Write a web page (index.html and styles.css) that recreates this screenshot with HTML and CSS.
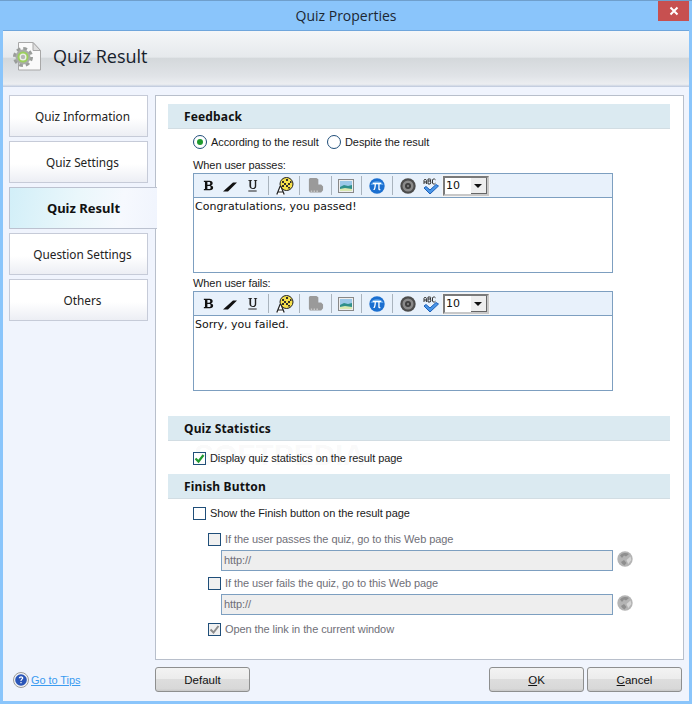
FILE: index.html
```html
<!DOCTYPE html>
<html lang="en">
<head>
    <meta charset="UTF-8">
    <meta name="viewport" content="width=device-width, initial-scale=1.0">
    <title>Quiz Properties</title>
    <link rel="stylesheet" href="styles.css">
</head>
<body>

<svg class="icon-defs" width="0" height="0">
    <defs>
        <symbol id="i-bold" viewBox="0 0 14 14"><path d="M2 2h6c2.500 0 3.500 1 3.500 2.700 0 1.300-.8 2-2 2.200 1.600.2 2.500 1 2.500 2.400C12 11 10.800 12 8.500 12H2v-1.200h1.200V3.200H2zM5.800 3.200v3.100h1.600c1 0 1.500-.5 1.500-1.600s-.5-1.500-1.500-1.500zM5.800 7.500v3.300h1.900c1.100 0 1.600-.6 1.600-1.700S8.800 7.500 7.700 7.500z" fill="#111"/></symbol>
        <symbol id="i-slash" viewBox="0 0 14 14"><path d="M0 12.500 L10 3.500 H14 L5 12.500z" fill="#111"/></symbol>
        <symbol id="i-under" viewBox="0 0 14 14"><path d="M2.500 1h4v1h-1v5.500c0 1.500.6 2.200 1.800 2.200S9.500 9 9.500 7.500V2h-1V1h3.500v1h-1v5.600c0 2.200-1.200 3.200-3.300 3.200S3.700 9.800 3.700 7.600V2h-1.200zM2.500 12.300h9v1.100h-9z" fill="#222"/></symbol>
        <symbol id="i-palette" viewBox="0 0 18 18"><circle cx="10.500" cy="7" r="6.500" fill="#f6e04a" stroke="#222"/><path d="M6 4h2v2H6zM10 2h2v2h-2zM8 6h2v2H8zM12 6h2v2h-2zM10 8h2v2h-2zM6 8h2v2H6zM14 4h1.500v2H14zM12 10h2v1.500h-2z" fill="#33302a"/><path d="M.8 17.500 4 9.500h1l3.200 8M2 15h5" fill="#fff" stroke="#222" stroke-width="1.200"/></symbol>
        <symbol id="i-media" viewBox="0 0 18 18"><path d="M3 1h7l2 1.500v5.500h3l2 2v4l-2 2.500H3l-1-2V2.500z" fill="#9a9a9a"/><path d="M4 15h1.500M7 15h1.500M10 15h1.500" stroke="#e6e6e6"/></symbol>
        <symbol id="i-image" viewBox="0 0 16 14"><rect x=".5" y=".5" width="15" height="13" fill="#eee" stroke="#888"/><rect x="2" y="2" width="12" height="10" fill="#9cc8e8"/><path d="M2 8l4-2 4 1 4-1v6H2z" fill="#2f8f8a"/><path d="M2 10l5-1 7 1v2H2z" fill="#d8e8b0"/></symbol>
        <symbol id="i-pi" viewBox="0 0 16 16"><circle cx="8" cy="8" r="7.700" fill="#1b6fd0"/><path d="M1.500 7a7 6 0 0 1 13 0z" fill="#5ea4ea"/><path d="M3.800 4.800h8.400v1.300h-1.600v4.400c0 .5.2.7.8.6v1.100c-1.300.3-2.100-.2-2.100-1.500V6.100H6.900c0 2.700-.4 4.700-1.300 6H4.200c1-1.500 1.400-3.300 1.400-6H3.800z" fill="#fff"/></symbol>
        <symbol id="i-speaker" viewBox="0 0 16 16"><circle cx="8" cy="8" r="7.700" fill="#4c4c4c"/><circle cx="8" cy="8" r="5.500" fill="#8a8a8a"/><circle cx="8" cy="8" r="3" fill="#3c3c3c"/><circle cx="8" cy="8" r="1.200" fill="#777"/></symbol>
        <symbol id="i-spell" viewBox="0 0 16 16"><path d="M1 6V2.300L2.200 1l1.200 1.300V6M1 4h2.400M5 1h2.200l.8.800-.8 1.200.8 1-.8 2H5zM5 3h2M12.500 1.800 11.500 1h-1.300L9.500 2v3l.7 1h1.300l1-.8" fill="none" stroke="#333"/><path d="M1 10l2-1.500L7 12l6-5.500 2.500 1.500L7 16z" fill="#4a96e8" stroke="#1c5fb8" stroke-width="1"/></symbol>
        <symbol id="i-go" viewBox="0 0 16 16"><circle cx="8" cy="8" r="7.700" fill="#b4b4b4"/><path d="M3 4.500a7 7 0 0 1 9-1.500l-3 2.500-2-1-2 2.500zM4 11l3-2 2.500 3-2 2.500A7 7 0 0 1 4 11z" fill="#8f8f8f"/><path d="M9.500 9l4-3.500.8 3.500-3 4z" fill="#d6d6d6"/></symbol>
    </defs>
</svg>

<div class="window">
    <div class="titlebar">
        <span class="title-text">Quiz Properties</span>
        <div class="close-btn">
            <svg width="10" height="10" viewBox="0 0 10 10"><path d="M1.500 1.500l7 7M8.500 1.500l-7 7" stroke="#fff" stroke-width="2"/></svg>
        </div>
    </div>

    <div class="client">
        <div class="page-header">
            <svg class="header-icon" width="32" height="32" viewBox="0 0 32 32">
                <path d="M6.500 1.500H21l7.500 8v19.500H6.500z" fill="#fafafa" stroke="#a8a8a8"/>
                <path d="M21 1.500v8h7.500z" fill="#dedede" stroke="#a8a8a8"/>
                <circle cx="11" cy="16" r="8" fill="none" stroke="#9a9d9a" stroke-width="4" stroke-dasharray="3.600 2.680"/>
                <circle cx="11" cy="16" r="7.500" fill="#a9aca9"/>
                <circle cx="11" cy="16" r="4.500" fill="#eef2e8" stroke="#9ccf5e" stroke-width="2"/>
                <circle cx="11" cy="16" r="2.200" fill="#b5b8b5"/>
            </svg>
            <h1 class="page-title">Quiz Result</h1>
        </div>

        <div class="main">
            <div class="sidebar">
                <div class="tab">Quiz Information</div>
                <div class="tab">Quiz Settings</div>
                <div class="tab tab-active">Quiz Result</div>
                <div class="tab">Question Settings</div>
                <div class="tab">Others</div>
                <a class="tips-link" href="#">
                    <svg width="16" height="16" viewBox="0 0 16 16"><circle cx="8" cy="8" r="7.500" fill="#f4f4f4" stroke="#9a9a9a"/><circle cx="8" cy="8" r="5.800" fill="#2a55b8"/><path d="M5.800 6.300c0-1.300 1-2 2.300-2s2.200.7 2.200 1.800c0 1.600-1.800 1.600-1.800 3H7.400c0-1.900 1.500-1.900 1.500-2.900 0-.5-.3-.8-.8-.8s-.9.300-.9.900zM7.400 10h1.200v1.300H7.400z" fill="#fff"/></svg>
                    <span>Go to Tips</span>
                </a>
            </div>

            <div class="content">
                <div class="panel">
                    <div class="section-head">Feedback</div>
                    <div class="radio-row">
                        <span class="radio radio-on"></span><span class="radio-label">According to the result</span>
                        <span class="radio"></span><span>Despite the result</span>
                    </div>

                    <div class="field-label">When user passes:</div>
                    <div class="editor">
                        <div class="toolbar">
                            <svg class="tb-b" width="13" height="13"><use href="#i-bold"/></svg>
                            <svg class="tb-i" width="14" height="14"><use href="#i-slash"/></svg>
                            <svg class="tb-u" width="13" height="13"><use href="#i-under"/></svg>
                            <span class="tb-sep"></span>
                            <svg class="tb-palette" width="18" height="18"><use href="#i-palette"/></svg>
                            <span class="tb-sep"></span>
                            <svg class="tb-icon" width="17" height="17"><use href="#i-media"/></svg>
                            <span class="tb-sep"></span>
                            <svg class="tb-image" width="16" height="14"><use href="#i-image"/></svg>
                            <span class="tb-sep"></span>
                            <svg class="tb-icon" width="16" height="16"><use href="#i-pi"/></svg>
                            <span class="tb-sep"></span>
                            <svg class="tb-icon" width="16" height="16"><use href="#i-speaker"/></svg>
                            <svg class="tb-spell" width="16" height="16"><use href="#i-spell"/></svg>
                            <div class="size-select"><span class="size-value">10</span><span class="size-arrow"></span></div>
                        </div>
                        <div class="editor-text">Congratulations, you passed!</div>
                    </div>

                    <div class="field-label field-label-2">When user fails:</div>
                    <div class="editor">
                        <div class="toolbar">
                            <svg class="tb-b" width="13" height="13"><use href="#i-bold"/></svg>
                            <svg class="tb-i" width="14" height="14"><use href="#i-slash"/></svg>
                            <svg class="tb-u" width="13" height="13"><use href="#i-under"/></svg>
                            <span class="tb-sep"></span>
                            <svg class="tb-palette" width="18" height="18"><use href="#i-palette"/></svg>
                            <span class="tb-sep"></span>
                            <svg class="tb-icon" width="17" height="17"><use href="#i-media"/></svg>
                            <span class="tb-sep"></span>
                            <svg class="tb-image" width="16" height="14"><use href="#i-image"/></svg>
                            <span class="tb-sep"></span>
                            <svg class="tb-icon" width="16" height="16"><use href="#i-pi"/></svg>
                            <span class="tb-sep"></span>
                            <svg class="tb-icon" width="16" height="16"><use href="#i-speaker"/></svg>
                            <svg class="tb-spell" width="16" height="16"><use href="#i-spell"/></svg>
                            <div class="size-select"><span class="size-value">10</span><span class="size-arrow"></span></div>
                        </div>
                        <div class="editor-text">Sorry, you failed.</div>
                    </div>

                    <div class="section-head section-stats">Quiz Statistics</div>
                    <div class="check-row check-stats">
                        <span class="check">
                            <svg width="11" height="11" viewBox="0 0 11 11"><path d="M1.500 5.500l3 3 5-6.500" fill="none" stroke="#1f9a2e" stroke-width="2.200"/></svg>
                        </span>
                        <span>Display quiz statistics on the result page</span>
                    </div>

                    <div class="section-head section-finish">Finish Button</div>
                    <div class="check-row check-finish">
                        <span class="check"></span>
                        <span>Show the Finish button on the result page</span>
                    </div>

                    <div class="sub-options">
                        <div class="check-row is-disabled">
                            <span class="check check-off"></span>
                            <span>If the user passes the quiz, go to this Web page</span>
                        </div>
                        <div class="url-row">
                            <div class="url-input">http://</div>
                            <svg class="url-go" width="16" height="16"><use href="#i-go"/></svg>
                        </div>
                        <div class="check-row is-disabled">
                            <span class="check check-off"></span>
                            <span>If the user fails the quiz, go to this Web page</span>
                        </div>
                        <div class="url-row">
                            <div class="url-input">http://</div>
                            <svg class="url-go" width="16" height="16"><use href="#i-go"/></svg>
                        </div>
                        <div class="check-row is-disabled check-open">
                            <span class="check check-off">
                                <svg width="11" height="11" viewBox="0 0 11 11"><path d="M1.500 5.500l3 3 5-6.500" fill="none" stroke="#8c8c8c" stroke-width="2"/></svg>
                            </span>
                            <span>Open the link in the current window</span>
                        </div>
                    </div>
                    <div class="watermark">SOFTPEDIA</div>
                </div>

                <div class="footer">
                    <button class="btn" type="button">Default</button>
                    <div class="footer-right">
                        <button class="btn" type="button"><u>O</u>K</button>
                        <button class="btn" type="button"><u>C</u>ancel</button>
                    </div>
                </div>
            </div>
        </div>
    </div>
</div>

</body>
</html>
```

FILE: styles.css
```css
* {
    box-sizing: border-box;
}

body {
    margin: 0;
    font-family: "Liberation Sans", Arial, sans-serif;
    font-size: 11px;
    letter-spacing: -.08px;
    color: #1a1a1a;
}

.icon-defs {
    position: absolute;
}

.window {
    width: 692px;
    height: 704px;
    display: flex;
    flex-direction: column;
    background-color: #8ac5fb;
    border-top: 1px solid #6f9fcc;
}

.titlebar {
    height: 29px;
    flex: none;
    display: flex;
    justify-content: center;
    align-items: center;
    position: relative;
}

.title-text {
    font-family: "Open Sans", Arial, sans-serif;
    font-size: 14px;
    letter-spacing: 0;
    color: #1c2733;
    padding-bottom: 1px;
}

.close-btn {
    position: absolute;
    top: 0;
    right: 3px;
    width: 31px;
    height: 20px;
    background-color: #c75050;
    display: flex;
    justify-content: center;
    align-items: center;
}

.client {
    flex: 1;
    margin: 0 3px 3px;
    display: flex;
    flex-direction: column;
    background-color: #f0f4fd;
    border-top: 1px solid #6fa6dc;
    min-height: 0;
}

.page-header {
    height: 56px;
    flex: none;
    padding-bottom: 5px;
    display: flex;
    align-items: center;
    background: linear-gradient(#f4f6f8 0%, #e6e9ec 47%, #d4d8db 48%, #e0e3e7 80%, #eceef1 95%, #bcc7dc 100%);
}

.header-icon {
    margin-left: 9px;
}

.page-title {
    margin: 0 0 2px 9px;
    font-family: "Open Sans", Arial, sans-serif;
    font-size: 18px;
    font-weight: 400;
    letter-spacing: 0;
    color: #16202b;
}

.main {
    flex: 1;
    display: flex;
    min-height: 0;
    padding-top: 8px;
}

.sidebar {
    width: 152px;
    flex: none;
    padding-left: 6px;
    display: flex;
    flex-direction: column;
    gap: 4px;
    position: relative;
}

.tab {
    width: 139px;
    height: 42px;
    padding: 0 0 0 8px;
    display: flex;
    justify-content: center;
    align-items: center;
    border: 1px solid #c6cbd8;
    background: linear-gradient(#ffffff 0%, #ffffff 55%, #eceef4 100%);
    font-family: "Noto Sans", Arial, sans-serif;
    font-size: 11.800px;
    letter-spacing: 0;
    color: #222;
}

.tab-active {
    width: 148px;
    padding-left: 0;
    font-weight: bold;
    font-size: 13px;
    color: #111;
    background: linear-gradient(100deg, #d2eff8 0%, #eaf7fb 45%, #f6f9fe 75%, #f0f4fd 100%);
    border-color: #bcc2d0;
    border-right: 0;
    position: relative;
    z-index: 1;
}

.tips-link {
    margin-top: auto;
    margin-bottom: 13px;
    margin-left: 4px;
    display: flex;
    align-items: center;
    gap: 2px;
    color: #3b9bf0;
}

.content {
    flex: 1;
    display: flex;
    flex-direction: column;
    min-width: 0;
}

.panel {
    height: 565px;
    width: 529px;
    flex: none;
    background-color: #fff;
    border: 1px solid #b8bfcb;
    padding: 8px 0 0 12px;
    position: relative;
}

.section-head {
    width: 502px;
    height: 25px;
    padding-left: 16px;
    display: flex;
    align-items: center;
    background-color: #dbeaf1;
    border-bottom: 1px solid #d2dde3;
    font-family: "Noto Sans", Arial, sans-serif;
    font-weight: bold;
    color: #111;
    font-size: 12px;
    letter-spacing: .15px;
}

.radio-row {
    margin: 5px 0 0 25px;
    height: 16px;
    display: flex;
    align-items: center;
}

.radio {
    width: 14px;
    height: 14px;
    border: 1px solid #1f4e79;
    border-radius: 50%;
    background-color: #fff;
    margin-right: 4px;
    position: relative;
}

.radio-on::after {
    content: "";
    position: absolute;
    top: 3px;
    left: 3px;
    width: 6px;
    height: 6px;
    border-radius: 50%;
    background-color: #1f9a2e;
}

.radio-label {
    width: 116px;
}

.field-label {
    margin: 8px 0 0 25px;
    height: 15px;
    line-height: 15px;
}

.field-label-2 {
    margin-top: 3px;
}

.editor {
    width: 420px;
    height: 100px;
    margin-left: 25px;
    border: 1px solid #7d9fc0;
    background-color: #fff;
}

.toolbar {
    height: 24px;
    display: flex;
    align-items: center;
    background-color: #e8f1fb;
    border-bottom: 1px solid #7d9fc0;
}

.tb-b {
    margin-left: 8px;
}

.tb-i {
    margin-left: 8px;
}

.tb-u {
    margin: 0 2px 0 9px;
}

.tb-sep {
    width: 1px;
    height: 19px;
    background-color: #a9b3bd;
    margin: 0 7px;
}

.tb-icon {
    flex: none;
}

.tb-palette {
    flex: none;
    margin-right: -2px;
}

.tb-image {
    flex: none;
    margin-left: -1px;
}

.tb-spell {
    margin-left: 7px;
}

.size-select {
    width: 46px;
    height: 20px;
    margin-left: 4px;
    display: flex;
    align-items: stretch;
    background-color: #fff;
    border: 2px solid;
    border-color: #7a7a7a #c8c8c8 #c8c8c8 #7a7a7a;
    outline: 1px solid #f4f4f4;
}

.size-value {
    flex: 1;
    padding-left: 1px;
    line-height: 16px;
    font-family: "DejaVu Sans", Arial, sans-serif;
    letter-spacing: 0;
    color: #111;
}

.size-arrow {
    width: 16px;
    background-color: #eeeeee;
    border-right: 1px solid #666;
    border-bottom: 1px solid #666;
    position: relative;
}

.size-arrow::after {
    content: "";
    position: absolute;
    top: 6px;
    left: 3px;
    border-top: 4px solid #111;
    border-left: 4px solid transparent;
    border-right: 4px solid transparent;
}

.editor-text {
    padding: 1px 1px;
    font-family: "DejaVu Sans", Arial, sans-serif;
    font-size: 11px;
    line-height: 16px;
    letter-spacing: 0;
    color: #111;
}

.section-stats {
    margin-top: 25px;
}

.section-finish {
    margin-top: 8px;
}

.check-row {
    height: 16px;
    display: flex;
    align-items: center;
    gap: 4px;
}

.check-stats {
    margin: 9px 0 0 25px;
}

.check-finish {
    margin: 6px 0 0 25px;
}

.check {
    width: 13px;
    height: 13px;
    flex: none;
    border: 1px solid #1f4e79;
    background-color: #fff;
    display: flex;
    justify-content: center;
    align-items: center;
}

.check-off {
    background-color: #f0f0f0;
}

.sub-options {
    margin: 10px 0 0 40px;
}

.is-disabled {
    color: #6f6f78;
}

.url-row {
    height: 21px;
    margin: 3px 0 4px 13px;
    display: flex;
    align-items: center;
    gap: 4px;
}

.url-input {
    width: 392px;
    height: 21px;
    line-height: 19px;
    padding-left: 2px;
    background-color: #eeeeee;
    border: 1px solid #7d9fc0;
    color: #6f6f78;
}

.url-go {
    margin-bottom: 3px;
}

.check-open {
    margin-top: 6px;
}

.watermark {
    position: absolute;
    top: 342px;
    left: 38px;
    font-size: 30px;
    font-weight: bold;
    color: rgba(120, 120, 120, .05);
    pointer-events: none;
}

.footer {
    width: 527px;
    margin-top: 7px;
    display: flex;
    justify-content: space-between;
}

.footer-right {
    display: flex;
    gap: 3px;
}

.btn {
    width: 95px;
    height: 25px;
    padding: 0;
    font-family: "Liberation Sans", Arial, sans-serif;
    font-size: 11.500px;
    color: #111;
    border: 1px solid #8e8f8f;
    border-radius: 3px;
    background: linear-gradient(#f3f3f3 0%, #ececec 48%, #dddddd 50%, #d8d8d8 90%, #c8c8c8 100%);
}
```
